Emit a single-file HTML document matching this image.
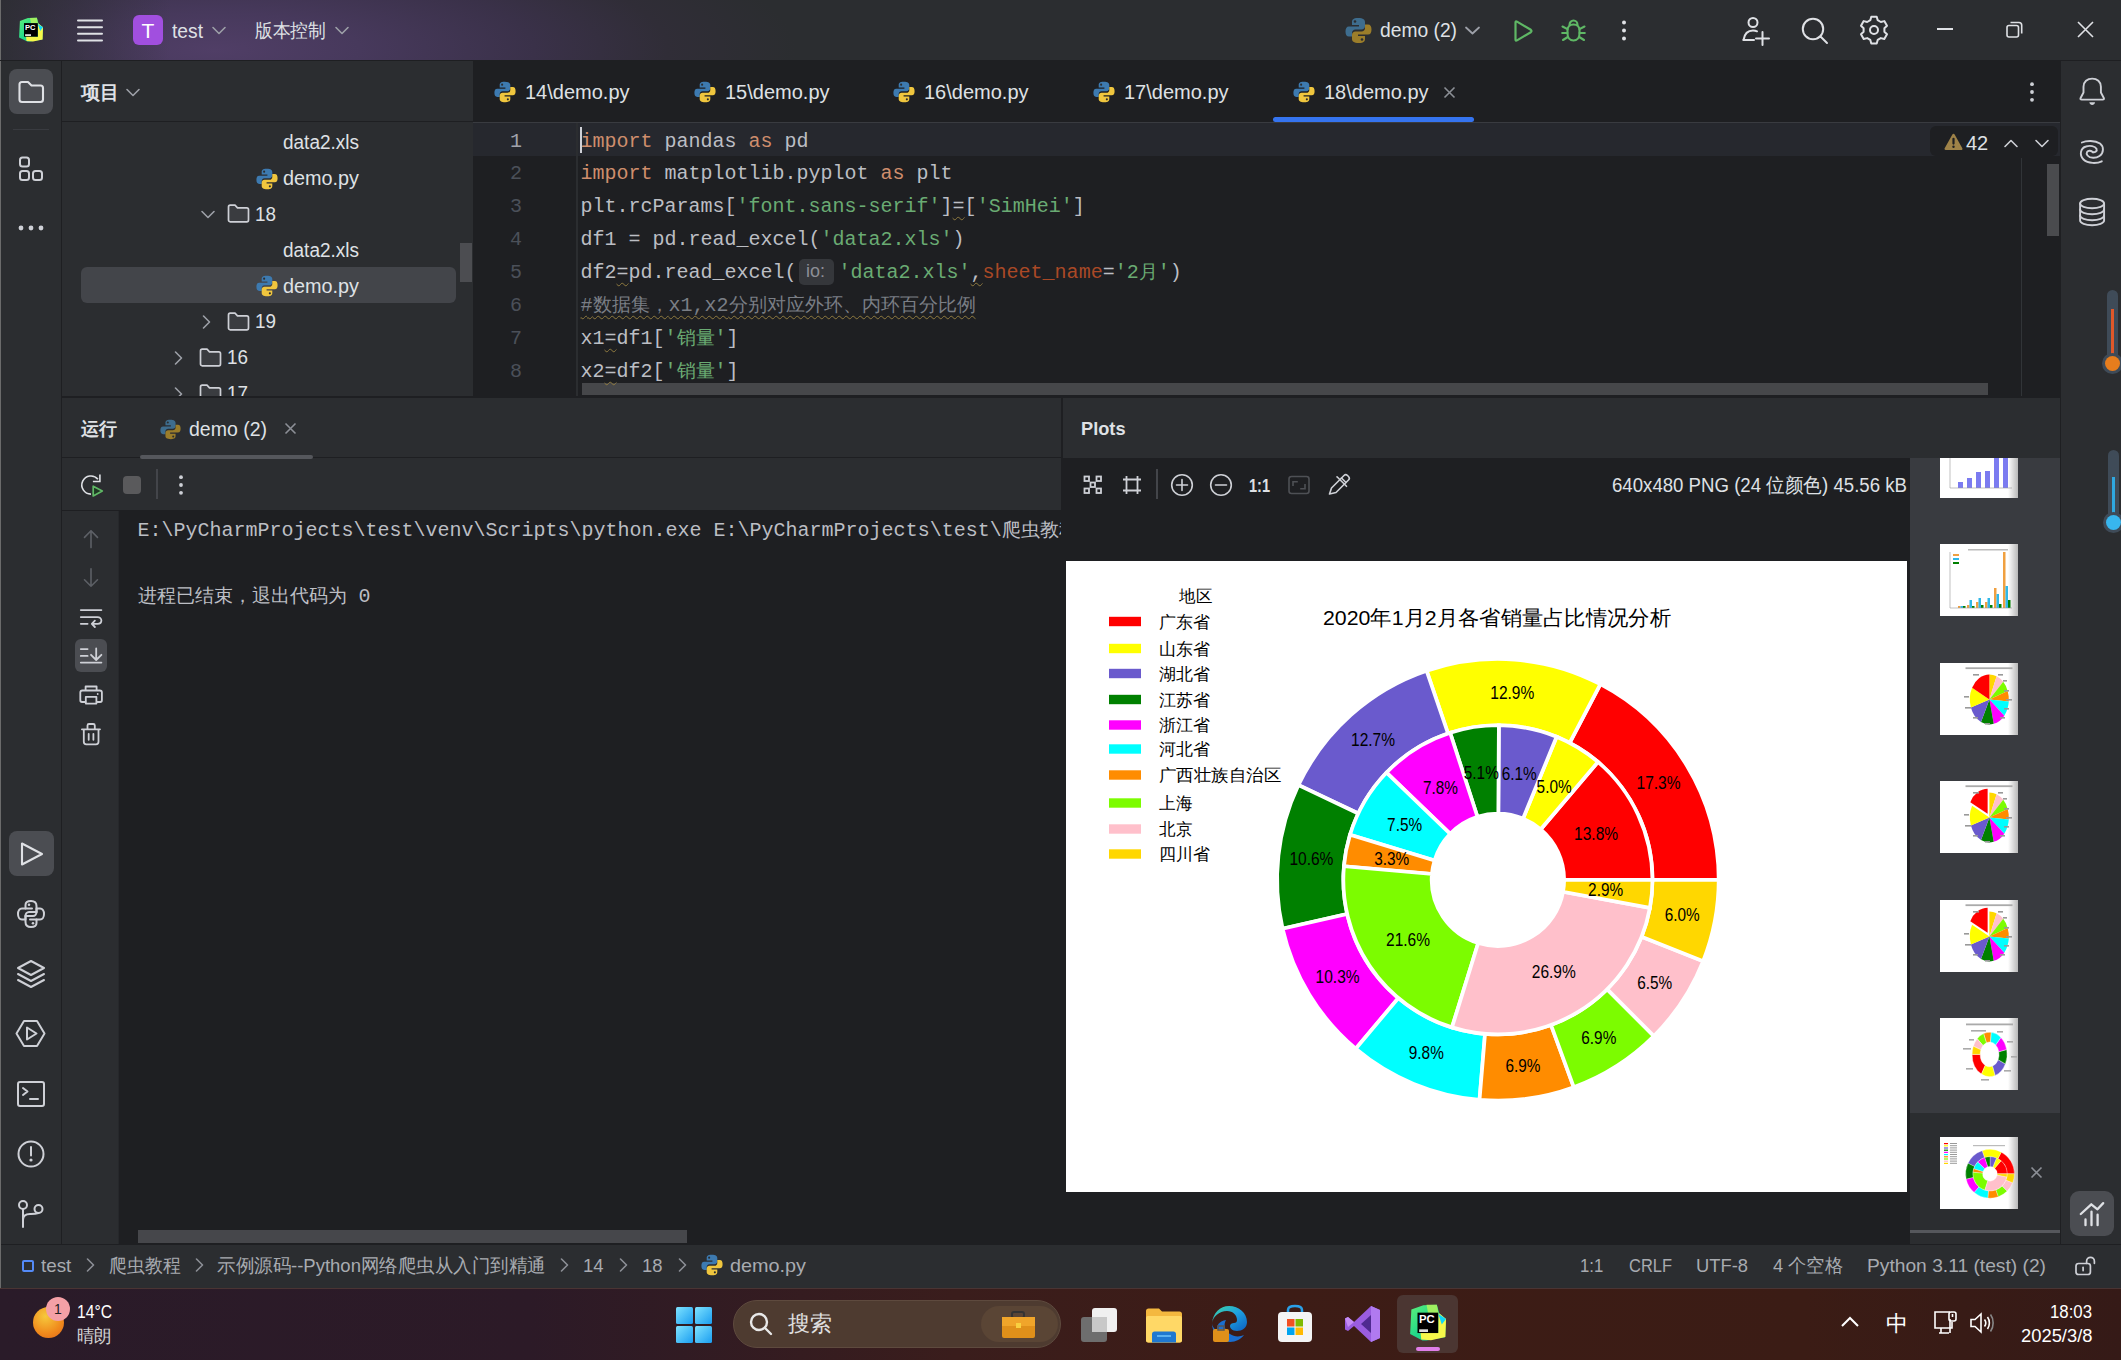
<!DOCTYPE html>
<html><head><meta charset="utf-8">
<style>
*{margin:0;padding:0;box-sizing:border-box}
html,body{width:2121px;height:1360px;overflow:hidden;background:#2b2d30;font-family:"Liberation Sans",sans-serif;color:#dfe1e5}
.a{position:absolute}
.t{position:absolute;white-space:nowrap;line-height:1}
.mono{font-family:"Liberation Mono",monospace}
.cj{font-family:"Liberation Serif",serif;font-size:18.9px}
svg{position:absolute;overflow:visible}
.ic{fill:none;stroke:#ced0d6;stroke-width:2;stroke-linecap:round;stroke-linejoin:round}
</style></head><body>
<div class="a" style="left:0;top:0;width:2121px;height:60px;background:#2b2d30"></div>
<div class="a" style="left:0;top:0;width:1000px;height:60px;background:linear-gradient(90deg,rgba(43,45,48,0.85) 0px,rgba(43,45,48,0) 170px),radial-gradient(ellipse 580px 150px at 215px 50px,#503e66 0%,#47395c 25%,#3a3149 55%,#302d37 78%,#2b2d30 100%)"></div>
<div class="a" style="left:0;top:0;width:1px;height:1290px;background:#6b6b6b"></div>
<div class="a" style="left:0;top:60px;width:2121px;height:1px;background:#1e1f22"></div>
<svg style="left:12px;top:12px" width="40" height="36" viewBox="12 12 40 36"><defs><linearGradient id="lg1" x1="0" y1="0" x2="1" y2="1"><stop offset="0" stop-color="#5ef07a"/><stop offset="0.5" stop-color="#21d789"/><stop offset="1" stop-color="#1fc98a"/></linearGradient></defs>
<path d="M19.9 21L27.9 18.1L36.9 17.8L38.5 23.5L43 27.3L42.4 39.5L30 41.6L27.3 41.6L19.1 37.4Z" fill="url(#lg1)"/>
<path d="M38 23.2L43 27.3L42.6 39.4L33 41.5L26.5 41L26 36L37.8 36.7Z" fill="#f6f84a"/>
<path d="M30 17.9L36.9 17.8L38 23.5L31 23.2Z" fill="#9ff060"/>
<path d="M37.8 23.9L43 27.3L40.2 31Z" fill="#0fd7f8"/>
<rect x="24" y="23.1" width="13.8" height="13.6" fill="#000"/>
<text x="25" y="30.2" font-size="7.6" font-weight="bold" fill="#fff" font-family="Liberation Sans" textLength="10.5" lengthAdjust="spacingAndGlyphs">PC</text>
<rect x="25.1" y="34.2" width="5.9" height="1.8" fill="#ddd"/></svg>
<svg style="left:77px;top:19px" width="26" height="23" viewBox="0 0 26 23"><g stroke="#dfe1e5" stroke-width="2" stroke-linecap="round"><path d="M1 1.5H25M1 8.2H25M1 14.8H25M1 21.5H25"/></g></svg>
<div class="a" style="left:133px;top:15px;width:30px;height:30px;border-radius:6px;background:#a14fdf"></div>
<div class="t" style="left:133px;top:20px;width:30px;text-align:center;font-size:21px;color:#fff">T</div>
<div class="t" style="left:172px;top:21px;font-size:20px;color:#dfe1e5;transform:scaleX(0.9612);transform-origin:0 0">test</div>
<svg style="left:212px;top:26px" width="14" height="9" viewBox="0 0 14 9"><path d="M1 1.5L7 7.5L13 1.5" class="ic" style="stroke:#9da0a8;stroke-width:1.6"/></svg>
<div class="t" style="left:255px;top:22px;font-size:18.5px;color:#dfe1e5;transform:scaleX(0.9342);transform-origin:0 0">版本控制</div>
<svg style="left:335px;top:26px" width="14" height="9" viewBox="0 0 14 9"><path d="M1 1.5L7 7.5L13 1.5" class="ic" style="stroke:#9da0a8;stroke-width:1.6"/></svg>
<svg style="left:1345px;top:17px" width="27" height="27" viewBox="0 0 27 27"><path d="M13 1C8 1 7 3 7 5V8H14V9.5H4C1.5 9.5 0.5 11.5 0.5 14.5C0.5 17.5 1.5 19.5 4 19.5H7V16C7 13.8 8.5 12.5 10.5 12.5H16.5C18.5 12.5 20 11 20 9V5C20 3 18.5 1 13 1Z" fill="#3e6d8e"/><path d="M14 26C19 26 20 24 20 22V19H13V17.5H23C25.5 17.5 26.5 15.5 26.5 12.5C26.5 9.5 25.5 7.5 23 7.5H20V11C20 13.2 18.5 14.5 16.5 14.5H10.5C8.5 14.5 7 16 7 18V22C7 24 8.5 26 14 26Z" fill="#9b7d2a"/><circle cx="10" cy="4.5" r="1.3" fill="#2b2d30"/><circle cx="17" cy="22.5" r="1.3" fill="#2b2d30"/></svg>
<div class="t" style="left:1380px;top:20px;font-size:20px;color:#dfe1e5;transform:scaleX(0.9621);transform-origin:0 0">demo (2)</div>
<svg style="left:1465px;top:26px" width="15" height="9" viewBox="0 0 15 9"><path d="M1 1.5L7.5 7.5L14 1.5" class="ic" style="stroke:#9da0a8;stroke-width:1.8"/></svg>
<svg style="left:1512px;top:19px" width="22" height="24" viewBox="0 0 22 24"><path d="M3.5 3.5Q3.5 1.8 5 2.6L18.8 10.8Q20.2 12 18.8 13.2L5 21.4Q3.5 22.2 3.5 20.5Z" fill="none" stroke="#5fb865" stroke-width="2.2" stroke-linejoin="round"/></svg>
<svg style="left:1561px;top:18px" width="25" height="25" viewBox="0 0 25 25"><g fill="none" stroke="#5fb865" stroke-width="2.1" stroke-linecap="round" stroke-linejoin="round"><path d="M8.5 7C8.5 4.5 10.3 2.5 12.5 2.5S16.5 4.5 16.5 7"/><path d="M12.5 6.5C8.5 6.5 6.5 9 6.5 12V15.5C6.5 19.5 9 22.5 12.5 22.5S18.5 19.5 18.5 15.5V12C18.5 9 16.5 6.5 12.5 6.5Z"/><path d="M1.5 8.5L6.5 11.2M23.5 8.5L18.5 11.2M1.2 15H6.5M23.8 15H18.5M2 22L6.8 19M23 22L18.2 19"/></g></svg>
<svg style="left:1620px;top:20px" width="8" height="22" viewBox="0 0 8 22"><g fill="#dfe1e5"><circle cx="4" cy="2.5" r="2"/><circle cx="4" cy="10.5" r="2"/><circle cx="4" cy="18.5" r="2"/></g></svg>
<svg style="left:1742px;top:16px" width="28" height="30" viewBox="0 0 28 30"><g class="ic" style="stroke:#dfe1e5"><circle cx="11" cy="6.5" r="4.5"/><path d="M1.5 24C2.5 17.5 6.5 14.5 11 14.5C12.8 14.5 14 14.8 15 15.3"/><path d="M1.5 24H12M20.5 16V29M14 22.5H27"/></g></svg>
<svg style="left:1801px;top:17px" width="28" height="28" viewBox="0 0 28 28"><g class="ic" style="stroke:#dfe1e5"><circle cx="12" cy="12" r="10.2"/><path d="M19.5 19.5L26 26"/></g></svg>
<svg style="left:1860px;top:16px" width="28" height="28" viewBox="0 0 28 28"><g class="ic" style="stroke:#dfe1e5"><path d="M11.3 2L16.7 2L17.7 5.5L20.8 7.3L24.3 6.4L27 11.1L24.4 13.6V17.1L27 19.6L24.3 24.3L20.8 23.4L17.7 25.2L16.7 28.7H11.3L10.3 25.2L7.2 23.4L3.7 24.3L1 19.6L3.6 17.1V13.6L1 11.1L3.7 6.4L7.2 7.3L10.3 5.5Z" transform="translate(0,-1.3)"/><circle cx="14" cy="14" r="4"/></g></svg>
<div class="a" style="left:1937px;top:28px;width:16px;height:2px;background:#dfe1e5"></div>
<svg style="left:2006px;top:21px" width="17" height="17" viewBox="0 0 17 17"><g fill="none" stroke="#dfe1e5" stroke-width="1.6"><rect x="1" y="4.5" width="11.5" height="11.5" rx="2"/><path d="M4.5 1.5H13C14.5 1.5 15.7 2.7 15.7 4.2V12.5"/></g></svg>
<svg style="left:2077px;top:21px" width="17" height="17" viewBox="0 0 17 17"><path d="M1 1L16 16M16 1L1 16" stroke="#dfe1e5" stroke-width="1.6"/></svg>
<!-- LEFT STRIP -->
<div class="a" style="left:1px;top:61px;width:60px;height:1183px;background:#2b2d30"></div>
<div class="a" style="left:61px;top:61px;width:1px;height:1183px;background:#1e1f22"></div>
<div class="a" style="left:9px;top:69px;width:44px;height:45px;border-radius:8px;background:#4b4d52"></div>
<svg style="left:17px;top:80px" width="28" height="24" viewBox="0 0 28 24"><path d="M2.5 4.5C2.5 2.8 3.5 2 5 2H11L14.5 5.5H23.5C25 5.5 26 6.5 26 8V19.5C26 21 25 22 23.5 22H5C3.5 22 2.5 21 2.5 19.5Z" class="ic" style="stroke:#dfe1e5;stroke-width:2.1"/></svg>
<div class="a" style="left:13px;top:129px;width:36px;height:1px;background:#393b40"></div>
<svg style="left:18px;top:156px" width="27" height="27" viewBox="0 0 27 27"><g class="ic" style="stroke:#ced0d6;stroke-width:2"><rect x="2" y="1.5" width="9" height="9" rx="2.5"/><rect x="2" y="15" width="9" height="9" rx="2.5"/><rect x="15" y="15" width="9" height="9" rx="2.5"/></g></svg>
<svg style="left:17px;top:224px" width="28" height="8" viewBox="0 0 28 8"><g fill="#ced0d6"><circle cx="4" cy="4" r="2.4"/><circle cx="14" cy="4" r="2.4"/><circle cx="24" cy="4" r="2.4"/></g></svg>
<!-- bottom left icons -->
<div class="a" style="left:9px;top:831px;width:45px;height:45px;border-radius:8px;background:#4b4d52"></div>
<svg style="left:19px;top:840px" width="26" height="28" viewBox="0 0 26 28"><path d="M3 3.5V24.5L23 14Z" class="ic" style="stroke:#dfe1e5;stroke-width:2.1"/></svg>
<svg style="left:16px;top:899px" width="30" height="30" viewBox="0 0 30 30"><g class="ic" style="stroke:#ced0d6;stroke-width:2"><path d="M15 2C10.5 2 9.5 4 9.5 6V9.5H16M20.5 13V7C20.5 4 18.5 2 15 2"/><path d="M9.5 9.5H6C3.5 9.5 2 12 2 15S3.5 20.5 6 20.5H9.5V17C9.5 15 11 13 13 13H20.5"/><path d="M15 28C19.5 28 20.5 26 20.5 24V20.5H14M9.5 17V23C9.5 26 11.5 28 15 28"/><path d="M20.5 20.5H24C26.5 20.5 28 18 28 15S26.5 9.5 24 9.5H20.5V13C20.5 15 19 17 17 17H9.5"/></g><circle cx="13" cy="5.8" r="1.3" fill="#ced0d6"/><circle cx="17" cy="24.2" r="1.3" fill="#ced0d6"/></svg>
<svg style="left:16px;top:959px" width="30" height="30" viewBox="0 0 30 30"><g class="ic" style="stroke:#ced0d6;stroke-width:2"><path d="M15 2L28 9L15 16L2 9Z"/><path d="M2 15L15 22L28 15"/><path d="M2 21L15 28L28 21"/></g></svg>
<svg style="left:15px;top:1019px" width="31" height="29" viewBox="0 0 31 29"><g class="ic" style="stroke:#ced0d6;stroke-width:2"><path d="M9 2H22L29.5 14.5L22 27H9L1.5 14.5Z"/><path d="M12 8.5V20.5L21.5 14.5Z"/></g></svg>
<svg style="left:16px;top:1080px" width="30" height="28" viewBox="0 0 30 28"><g class="ic" style="stroke:#ced0d6;stroke-width:2"><rect x="2" y="2" width="26" height="24" rx="2"/><path d="M7 8L11.5 11.5L7 15M14 19H22"/></g></svg>
<svg style="left:16px;top:1139px" width="30" height="30" viewBox="0 0 30 30"><g class="ic" style="stroke:#ced0d6;stroke-width:2"><circle cx="15" cy="15" r="12.5"/><path d="M15 8V16.5"/></g><circle cx="15" cy="21" r="1.6" fill="#ced0d6"/></svg>
<svg style="left:17px;top:1199px" width="28" height="30" viewBox="0 0 28 30"><g class="ic" style="stroke:#ced0d6;stroke-width:2"><circle cx="6" cy="6" r="4"/><circle cx="21.5" cy="10" r="4"/><path d="M6 10V28M6 21C6 17 9 15 13 15H14C17 15 20 14.5 21.5 14"/></g></svg>

<!-- PROJECT PANEL -->
<div class="a" style="left:62px;top:61px;width:411px;height:335px;background:#2b2d30"></div>
<div class="a" style="left:62px;top:121px;width:411px;height:1px;background:#1e1f22"></div>
<div class="t" style="left:81px;top:83px;font-size:19px;font-weight:bold;color:#dfe1e5">项目</div>
<svg style="left:126px;top:88px" width="14" height="9" viewBox="0 0 14 9"><path d="M1 1.5L7 7.5L13 1.5" class="ic" style="stroke:#9da0a8;stroke-width:1.6"/></svg>
<div class="a" style="left:81px;top:267px;width:375px;height:36px;border-radius:6px;background:#43454a"></div>
<div class="a" style="left:460px;top:243px;width:12px;height:39px;background:#4c4d51"></div>

<div class="a" style="left:62px;top:122px;width:410px;height:274px;overflow:hidden">
<div class="t" style="left:221px;top:10.0px;font-size:20px;color:#dfe1e5;transform:scaleX(0.9493);transform-origin:0 0">data2.xls</div>
<div class="t" style="left:221px;top:46.0px;font-size:20px;color:#dfe1e5;transform:scaleX(0.9906);transform-origin:0 0">demo.py</div>
<svg style="left:194px;top:45.5px" width="22" height="22" viewBox="0 0 27 27"><path d="M13 1C8 1 7 3 7 5V8H14V9.5H4C1.5 9.5 0.5 11.5 0.5 14.5C0.5 17.5 1.5 19.5 4 19.5H7V16C7 13.8 8.5 12.5 10.5 12.5H16.5C18.5 12.5 20 11 20 9V5C20 3 18.5 1 13 1Z" fill="#3d7ab0"/><path d="M14 26C19 26 20 24 20 22V19H13V17.5H23C25.5 17.5 26.5 15.5 26.5 12.5C26.5 9.5 25.5 7.5 23 7.5H20V11C20 13.2 18.5 14.5 16.5 14.5H10.5C8.5 14.5 7 16 7 18V22C7 24 8.5 26 14 26Z" fill="#f0c63e"/><circle cx="10" cy="4.5" r="1.3" fill="#2b2d30"/><circle cx="17" cy="22.5" r="1.3" fill="#2b2d30"/></svg>
<div class="t" style="left:193px;top:81.5px;font-size:20px;color:#dfe1e5;transform:scaleX(0.9438);transform-origin:0 0">18</div>
<svg style="left:165px;top:82px" width="23" height="19" viewBox="0 0 23 19"><path d="M1.5 3C1.5 2 2.2 1.2 3.2 1.2H8L10.5 3.8H19.8C20.8 3.8 21.5 4.5 21.5 5.5V16C21.5 17 20.8 17.8 19.8 17.8H3.2C2.2 17.8 1.5 17 1.5 16Z" fill="#3a3c40" stroke="#ced0d6" stroke-width="1.7" stroke-linejoin="round"/></svg>
<svg style="left:139px;top:88px" width="14" height="9" viewBox="0 0 14 9"><path d="M1 1.5L7 7.5L13 1.5" class="ic" style="stroke:#9da0a8;stroke-width:1.6"/></svg>
<div class="t" style="left:221px;top:118.0px;font-size:20px;color:#dfe1e5;transform:scaleX(0.9493);transform-origin:0 0">data2.xls</div>
<div class="t" style="left:221px;top:153.5px;font-size:20px;color:#dfe1e5;transform:scaleX(0.9906);transform-origin:0 0">demo.py</div>
<svg style="left:194px;top:153px" width="22" height="22" viewBox="0 0 27 27"><path d="M13 1C8 1 7 3 7 5V8H14V9.5H4C1.5 9.5 0.5 11.5 0.5 14.5C0.5 17.5 1.5 19.5 4 19.5H7V16C7 13.8 8.5 12.5 10.5 12.5H16.5C18.5 12.5 20 11 20 9V5C20 3 18.5 1 13 1Z" fill="#3d7ab0"/><path d="M14 26C19 26 20 24 20 22V19H13V17.5H23C25.5 17.5 26.5 15.5 26.5 12.5C26.5 9.5 25.5 7.5 23 7.5H20V11C20 13.2 18.5 14.5 16.5 14.5H10.5C8.5 14.5 7 16 7 18V22C7 24 8.5 26 14 26Z" fill="#f0c63e"/><circle cx="10" cy="4.5" r="1.3" fill="#2b2d30"/><circle cx="17" cy="22.5" r="1.3" fill="#2b2d30"/></svg>
<div class="t" style="left:193px;top:189.0px;font-size:20px;color:#dfe1e5;transform:scaleX(0.9438);transform-origin:0 0">19</div>
<svg style="left:165px;top:189.5px" width="23" height="19" viewBox="0 0 23 19"><path d="M1.5 3C1.5 2 2.2 1.2 3.2 1.2H8L10.5 3.8H19.8C20.8 3.8 21.5 4.5 21.5 5.5V16C21.5 17 20.8 17.8 19.8 17.8H3.2C2.2 17.8 1.5 17 1.5 16Z" fill="#3a3c40" stroke="#ced0d6" stroke-width="1.7" stroke-linejoin="round"/></svg>
<svg style="left:140px;top:192.5px" width="9" height="14" viewBox="0 0 9 14"><path d="M1.5 1L7.5 7L1.5 13" class="ic" style="stroke:#9da0a8;stroke-width:1.6"/></svg>
<div class="t" style="left:165px;top:225.0px;font-size:20px;color:#dfe1e5;transform:scaleX(0.9438);transform-origin:0 0">16</div>
<svg style="left:137px;top:225.5px" width="23" height="19" viewBox="0 0 23 19"><path d="M1.5 3C1.5 2 2.2 1.2 3.2 1.2H8L10.5 3.8H19.8C20.8 3.8 21.5 4.5 21.5 5.5V16C21.5 17 20.8 17.8 19.8 17.8H3.2C2.2 17.8 1.5 17 1.5 16Z" fill="#3a3c40" stroke="#ced0d6" stroke-width="1.7" stroke-linejoin="round"/></svg>
<svg style="left:112px;top:228.5px" width="9" height="14" viewBox="0 0 9 14"><path d="M1.5 1L7.5 7L1.5 13" class="ic" style="stroke:#9da0a8;stroke-width:1.6"/></svg>
<div class="t" style="left:165px;top:261.0px;font-size:20px;color:#dfe1e5;transform:scaleX(0.9438);transform-origin:0 0">17</div>
<svg style="left:137px;top:261.5px" width="23" height="19" viewBox="0 0 23 19"><path d="M1.5 3C1.5 2 2.2 1.2 3.2 1.2H8L10.5 3.8H19.8C20.8 3.8 21.5 4.5 21.5 5.5V16C21.5 17 20.8 17.8 19.8 17.8H3.2C2.2 17.8 1.5 17 1.5 16Z" fill="#3a3c40" stroke="#ced0d6" stroke-width="1.7" stroke-linejoin="round"/></svg>
<svg style="left:112px;top:264.5px" width="9" height="14" viewBox="0 0 9 14"><path d="M1.5 1L7.5 7L1.5 13" class="ic" style="stroke:#9da0a8;stroke-width:1.6"/></svg>
</div>
<div class="a" style="left:473px;top:61px;width:1588px;height:335px;background:#1e1f22"></div>
<div class="a" style="left:473px;top:122px;width:1588px;height:1px;background:#393b40"></div>
<svg style="left:494px;top:81px" width="22" height="22" viewBox="0 0 27 27"><path d="M13 1C8 1 7 3 7 5V8H14V9.5H4C1.5 9.5 0.5 11.5 0.5 14.5C0.5 17.5 1.5 19.5 4 19.5H7V16C7 13.8 8.5 12.5 10.5 12.5H16.5C18.5 12.5 20 11 20 9V5C20 3 18.5 1 13 1Z" fill="#3d7ab0"/><path d="M14 26C19 26 20 24 20 22V19H13V17.5H23C25.5 17.5 26.5 15.5 26.5 12.5C26.5 9.5 25.5 7.5 23 7.5H20V11C20 13.2 18.5 14.5 16.5 14.5H10.5C8.5 14.5 7 16 7 18V22C7 24 8.5 26 14 26Z" fill="#f0c63e"/><circle cx="10" cy="4.5" r="1.3" fill="#2b2d30"/><circle cx="17" cy="22.5" r="1.3" fill="#2b2d30"/></svg>
<div class="t" style="left:525px;top:82px;font-size:20px;color:#dfe1e5">14\demo.py</div>
<svg style="left:694px;top:81px" width="22" height="22" viewBox="0 0 27 27"><path d="M13 1C8 1 7 3 7 5V8H14V9.5H4C1.5 9.5 0.5 11.5 0.5 14.5C0.5 17.5 1.5 19.5 4 19.5H7V16C7 13.8 8.5 12.5 10.5 12.5H16.5C18.5 12.5 20 11 20 9V5C20 3 18.5 1 13 1Z" fill="#3d7ab0"/><path d="M14 26C19 26 20 24 20 22V19H13V17.5H23C25.5 17.5 26.5 15.5 26.5 12.5C26.5 9.5 25.5 7.5 23 7.5H20V11C20 13.2 18.5 14.5 16.5 14.5H10.5C8.5 14.5 7 16 7 18V22C7 24 8.5 26 14 26Z" fill="#f0c63e"/><circle cx="10" cy="4.5" r="1.3" fill="#2b2d30"/><circle cx="17" cy="22.5" r="1.3" fill="#2b2d30"/></svg>
<div class="t" style="left:725px;top:82px;font-size:20px;color:#dfe1e5">15\demo.py</div>
<svg style="left:893px;top:81px" width="22" height="22" viewBox="0 0 27 27"><path d="M13 1C8 1 7 3 7 5V8H14V9.5H4C1.5 9.5 0.5 11.5 0.5 14.5C0.5 17.5 1.5 19.5 4 19.5H7V16C7 13.8 8.5 12.5 10.5 12.5H16.5C18.5 12.5 20 11 20 9V5C20 3 18.5 1 13 1Z" fill="#3d7ab0"/><path d="M14 26C19 26 20 24 20 22V19H13V17.5H23C25.5 17.5 26.5 15.5 26.5 12.5C26.5 9.5 25.5 7.5 23 7.5H20V11C20 13.2 18.5 14.5 16.5 14.5H10.5C8.5 14.5 7 16 7 18V22C7 24 8.5 26 14 26Z" fill="#f0c63e"/><circle cx="10" cy="4.5" r="1.3" fill="#2b2d30"/><circle cx="17" cy="22.5" r="1.3" fill="#2b2d30"/></svg>
<div class="t" style="left:924px;top:82px;font-size:20px;color:#dfe1e5">16\demo.py</div>
<svg style="left:1093px;top:81px" width="22" height="22" viewBox="0 0 27 27"><path d="M13 1C8 1 7 3 7 5V8H14V9.5H4C1.5 9.5 0.5 11.5 0.5 14.5C0.5 17.5 1.5 19.5 4 19.5H7V16C7 13.8 8.5 12.5 10.5 12.5H16.5C18.5 12.5 20 11 20 9V5C20 3 18.5 1 13 1Z" fill="#3d7ab0"/><path d="M14 26C19 26 20 24 20 22V19H13V17.5H23C25.5 17.5 26.5 15.5 26.5 12.5C26.5 9.5 25.5 7.5 23 7.5H20V11C20 13.2 18.5 14.5 16.5 14.5H10.5C8.5 14.5 7 16 7 18V22C7 24 8.5 26 14 26Z" fill="#f0c63e"/><circle cx="10" cy="4.5" r="1.3" fill="#2b2d30"/><circle cx="17" cy="22.5" r="1.3" fill="#2b2d30"/></svg>
<div class="t" style="left:1124px;top:82px;font-size:20px;color:#dfe1e5">17\demo.py</div>
<svg style="left:1293px;top:81px" width="22" height="22" viewBox="0 0 27 27"><path d="M13 1C8 1 7 3 7 5V8H14V9.5H4C1.5 9.5 0.5 11.5 0.5 14.5C0.5 17.5 1.5 19.5 4 19.5H7V16C7 13.8 8.5 12.5 10.5 12.5H16.5C18.5 12.5 20 11 20 9V5C20 3 18.5 1 13 1Z" fill="#3d7ab0"/><path d="M14 26C19 26 20 24 20 22V19H13V17.5H23C25.5 17.5 26.5 15.5 26.5 12.5C26.5 9.5 25.5 7.5 23 7.5H20V11C20 13.2 18.5 14.5 16.5 14.5H10.5C8.5 14.5 7 16 7 18V22C7 24 8.5 26 14 26Z" fill="#f0c63e"/><circle cx="10" cy="4.5" r="1.3" fill="#2b2d30"/><circle cx="17" cy="22.5" r="1.3" fill="#2b2d30"/></svg>
<div class="t" style="left:1324px;top:82px;font-size:20px;color:#dfe1e5">18\demo.py</div>
<svg style="left:1443px;top:86px" width="13" height="13" viewBox="0 0 13 13"><path d="M1.5 1.5L11.5 11.5M11.5 1.5L1.5 11.5" stroke="#8c8f96" stroke-width="1.6"/></svg>
<div class="a" style="left:1273px;top:117px;width:201px;height:5px;border-radius:3px;background:#3574f0"></div>
<svg style="left:2028px;top:82px" width="8" height="20" viewBox="0 0 8 20"><g fill="#ced0d6"><circle cx="4" cy="2.2" r="1.9"/><circle cx="4" cy="10" r="1.9"/><circle cx="4" cy="17.8" r="1.9"/></g></svg>
<div class="a" style="left:473px;top:123px;width:1588px;height:33px;background:#26282e"></div>
<div class="a" style="left:576px;top:123px;width:2px;height:273px;background:#2b2d30"></div>
<div class="a" style="left:2021px;top:158px;width:1px;height:238px;background:#313438"></div>
<div class="a" style="left:1930px;top:126px;width:128px;height:30px;border-radius:6px;background:#1e1f22"></div>
<svg style="left:1944px;top:133px" width="19" height="18" viewBox="0 0 19 18"><path d="M9.5 2.2L17.2 15.8H1.8Z" fill="#9e8248" stroke="#9e8248" stroke-width="2.6" stroke-linejoin="round"/><path d="M9.5 5.8V10.6" stroke="#1e1f22" stroke-width="2.2" stroke-linecap="round"/><circle cx="9.5" cy="13.8" r="1.2" fill="#1e1f22"/></svg>
<div class="t" style="left:1966px;top:133px;font-size:20px;color:#dfe1e5">42</div>
<svg style="left:2004px;top:139px" width="14" height="9" viewBox="0 0 14 9"><path d="M1 7.5L7 1.5L13 7.5" class="ic" style="stroke:#ced0d6;stroke-width:1.6"/></svg>
<svg style="left:2035px;top:139px" width="14" height="9" viewBox="0 0 14 9"><path d="M1 1.5L7 7.5L13 1.5" class="ic" style="stroke:#ced0d6;stroke-width:1.6"/></svg>
<div class="a" style="left:2047px;top:164px;width:12px;height:72px;background:#4a4b4e"></div>
<div class="a" style="left:582px;top:383px;width:1406px;height:12px;background:#46474a"></div>
<div class="t mono" style="left:498px;top:131.5px;width:24px;text-align:right;font-size:20px;color:#a1a3ab">1</div>
<div class="t mono" style="left:498px;top:164.4px;width:24px;text-align:right;font-size:20px;color:#4b5059">2</div>
<div class="t mono" style="left:498px;top:197.4px;width:24px;text-align:right;font-size:20px;color:#4b5059">3</div>
<div class="t mono" style="left:498px;top:230.3px;width:24px;text-align:right;font-size:20px;color:#4b5059">4</div>
<div class="t mono" style="left:498px;top:263.2px;width:24px;text-align:right;font-size:20px;color:#4b5059">5</div>
<div class="t mono" style="left:498px;top:296.1px;width:24px;text-align:right;font-size:20px;color:#4b5059">6</div>
<div class="t mono" style="left:498px;top:329.1px;width:24px;text-align:right;font-size:20px;color:#4b5059">7</div>
<div class="t mono" style="left:498px;top:362.0px;width:24px;text-align:right;font-size:20px;color:#4b5059">8</div>
<div class="t mono" style="left:580.5px;top:131.5px;font-size:20px;color:#bcbec4"><span style="color:#cf8e6d">import</span><span style="color:#bcbec4"> pandas </span><span style="color:#cf8e6d">as</span><span style="color:#bcbec4"> pd</span></div>
<div class="t mono" style="left:580.5px;top:164.4px;font-size:20px;color:#bcbec4"><span style="color:#cf8e6d">import</span><span style="color:#bcbec4"> matplotlib.pyplot </span><span style="color:#cf8e6d">as</span><span style="color:#bcbec4"> plt</span></div>
<div class="t mono" style="left:580.5px;top:197.4px;font-size:20px;color:#bcbec4"><span style="color:#bcbec4">plt.rcParams[</span><span style="color:#6aab73">'font.sans-serif'</span><span style="color:#bcbec4">]</span><span style="color:#bcbec4;text-decoration:underline wavy #8f7a3f;text-decoration-thickness:1px;text-underline-offset:4px">=</span><span style="color:#bcbec4">[</span><span style="color:#6aab73">'SimHei'</span><span style="color:#bcbec4">]</span></div>
<div class="t mono" style="left:580.5px;top:230.3px;font-size:20px;color:#bcbec4"><span style="color:#bcbec4">df1 = pd.read_excel(</span><span style="color:#6aab73">'data2.xls'</span><span style="color:#bcbec4">)</span></div>
<div class="t mono" style="left:580.5px;top:263.2px;font-size:20px;color:#bcbec4"><span style="color:#bcbec4">df2</span><span style="color:#bcbec4;text-decoration:underline wavy #8f7a3f;text-decoration-thickness:1px;text-underline-offset:4px">=</span><span style="color:#bcbec4">pd.read_excel(</span><span style="display:inline-block;width:42px"></span><span style="color:#6aab73">'data2.xls'</span><span style="color:#bcbec4;text-decoration:underline wavy #8f7a3f;text-decoration-thickness:1px;text-underline-offset:4px">,</span><span style="color:#aa4926">sheet_name</span><span style="color:#bcbec4">=</span><span style="color:#6aab73">'2<span class="cj">月</span>'</span><span style="color:#bcbec4">)</span></div>
<div class="t mono" style="left:580.5px;top:296.1px;font-size:20px;color:#bcbec4"><span style="color:#7a7e85;text-decoration:underline wavy #8f7a3f;text-decoration-thickness:1px;text-underline-offset:4px">#<span class="cj">数据集，</span>x1,x2<span class="cj">分别对应外环、内环百分比例</span></span></div>
<div class="t mono" style="left:580.5px;top:329.1px;font-size:20px;color:#bcbec4"><span style="color:#bcbec4">x1</span><span style="color:#bcbec4;text-decoration:underline wavy #8f7a3f;text-decoration-thickness:1px;text-underline-offset:4px">=</span><span style="color:#bcbec4">df1[</span><span style="color:#6aab73">'<span class="cj">销量</span>'</span><span style="color:#bcbec4">]</span></div>
<div class="t mono" style="left:580.5px;top:362.0px;font-size:20px;color:#bcbec4"><span style="color:#bcbec4">x2</span><span style="color:#bcbec4;text-decoration:underline wavy #8f7a3f;text-decoration-thickness:1px;text-underline-offset:4px">=</span><span style="color:#bcbec4">df2[</span><span style="color:#6aab73">'<span class="cj">销量</span>'</span><span style="color:#bcbec4">]</span></div>
<div class="a" style="left:799px;top:259px;width:35px;height:26px;border-radius:5px;background:#35373b"></div>
<div class="t" style="left:806px;top:262px;font-size:18px;color:#8c8f96">io:</div>
<div class="a" style="left:580px;top:127px;width:2px;height:26px;background:#ced0d6"></div>
<div class="a" style="left:473px;top:396px;width:1588px;height:2px;background:#1e1f22"></div>
<!-- RIGHT STRIP -->
<div class="a" style="left:2061px;top:61px;width:60px;height:1183px;background:#2b2d30"></div>
<div class="a" style="left:2060px;top:61px;width:1px;height:1183px;background:#1e1f22"></div>
<svg style="left:2061px;top:61px" width="60" height="180" viewBox="2061 61 60 180"><g fill="none" stroke="#ced0d6" stroke-width="1.9" stroke-linecap="round" stroke-linejoin="round">
<path d="M2083.5 92.5V86.8C2083.5 81.8 2087.3 78.6 2092.2 78.6C2097.1 78.6 2100.9 81.8 2100.9 86.8V92.5L2103.8 98Q2104.5 99.6 2102.7 99.6H2081.7Q2079.9 99.6 2080.6 98Z"/>
<path d="M2081.9 142.5C2086 140.5 2095 140 2100 143.5C2104 146.5 2104 153 2099.5 156C2096 158.5 2090 158.5 2087.5 155.5C2085.5 153 2087.5 150.5 2090 150.8C2091.5 151 2092.5 151.8 2093 152.3"/>
<path d="M2101.8 161.3C2097.5 163.5 2088 164 2083.5 159.5C2079 155 2080.5 148 2086 146.5C2090 145.3 2095 146 2096.5 148.8C2097.5 151 2095 152.5 2093 152.3"/>
<ellipse cx="2092.1" cy="203.5" rx="12" ry="4.7"/><path d="M2080.1 203.5V220.6C2080.1 223.2 2085.5 225.3 2092.1 225.3C2098.7 225.3 2104.1 223.2 2104.1 220.6V203.5"/><path d="M2080.1 209.5C2080.1 212.1 2085.5 214.2 2092.1 214.2C2098.7 214.2 2104.1 212.1 2104.1 209.5M2080.1 215.5C2080.1 218.1 2085.5 220.2 2092.1 220.2C2098.7 220.2 2104.1 218.1 2104.1 215.5"/>
</g><path d="M2089.3 102.3H2095.1C2094.7 104 2093.6 105 2092.2 105C2090.8 105 2089.7 104 2089.3 102.3Z" fill="#ced0d6"/></svg>
<!-- thermometers -->
<div class="a" style="left:2106.5px;top:290px;width:11px;height:78px;border-radius:6px;background:#3f4b58"></div>
<div class="a" style="left:2110.5px;top:309px;width:3.5px;height:50px;background:#e0582a"></div>
<div class="a" style="left:2101.5px;top:352.5px;width:21px;height:21px;border-radius:11px;background:#3f4b58"></div>
<div class="a" style="left:2104.5px;top:355.5px;width:15px;height:15px;border-radius:8px;background:#e77d1d"></div>
<div class="a" style="left:2107.5px;top:450px;width:11px;height:78px;border-radius:6px;background:#3f4b58"></div>
<div class="a" style="left:2111.5px;top:477px;width:3.5px;height:40px;background:#2fa8e0"></div>
<div class="a" style="left:2102.5px;top:512px;width:21px;height:21px;border-radius:11px;background:#3f4b58"></div>
<div class="a" style="left:2105.5px;top:515px;width:15px;height:15px;border-radius:8px;background:#38b6ee"></div>
<!-- bottom right plot button -->
<div class="a" style="left:2070px;top:1191px;width:44px;height:45px;border-radius:9px;background:#4b4d52"></div>
<svg style="left:2060px;top:1185px" width="61" height="60" viewBox="2060 1185 61 60"><g fill="none" stroke="#dfe1e5" stroke-width="2.3" stroke-linecap="round" stroke-linejoin="round"><path d="M2080.8 1214L2091.3 1204.3L2097.5 1209.3L2103.2 1203.1"/><path d="M2085.5 1219.4V1225.2M2091.5 1211.6V1225.2M2097.6 1214.7V1225.2"/></g></svg>
<div class="a" style="left:62px;top:396px;width:1999px;height:2px;background:#1e1f22"></div>
<div class="a" style="left:62px;top:398px;width:999px;height:846px;background:#2b2d30"></div>
<div class="a" style="left:62px;top:457px;width:999px;height:1px;background:#1e1f22"></div>
<div class="t" style="left:81px;top:420px;font-size:18px;color:#dfe1e5;font-weight:bold;transform:scaleX(1.0000);transform-origin:0 0">运行</div>
<svg style="left:160px;top:419px" width="21" height="21" viewBox="0 0 27 27"><path d="M13 1C8 1 7 3 7 5V8H14V9.5H4C1.5 9.5 0.5 11.5 0.5 14.5C0.5 17.5 1.5 19.5 4 19.5H7V16C7 13.8 8.5 12.5 10.5 12.5H16.5C18.5 12.5 20 11 20 9V5C20 3 18.5 1 13 1Z" fill="#3e6d8e"/><path d="M14 26C19 26 20 24 20 22V19H13V17.5H23C25.5 17.5 26.5 15.5 26.5 12.5C26.5 9.5 25.5 7.5 23 7.5H20V11C20 13.2 18.5 14.5 16.5 14.5H10.5C8.5 14.5 7 16 7 18V22C7 24 8.5 26 14 26Z" fill="#9b7d2a"/><circle cx="10" cy="4.5" r="1.3" fill="#2b2d30"/><circle cx="17" cy="22.5" r="1.3" fill="#2b2d30"/></svg>
<div class="t" style="left:189px;top:418.5px;font-size:20px;color:#dfe1e5;transform:scaleX(0.9746);transform-origin:0 0">demo (2)</div>
<svg style="left:284px;top:422px" width="13" height="13" viewBox="0 0 13 13"><path d="M1.5 1.5L11.5 11.5M11.5 1.5L1.5 11.5" stroke="#8c8f96" stroke-width="1.6"/></svg>
<div class="a" style="left:140px;top:455px;width:173px;height:4px;border-radius:2px;background:#55575c"></div>
<svg style="left:62px;top:460px" width="138" height="50" viewBox="0 0 138 50"><path d="M28.95 34.15A9.1 9.1 0 1 1 35.92 19.2" fill="none" stroke="#dfe1e5" stroke-width="1.6"/><path d="M30.9 21.5H37.9V14.6" fill="none" stroke="#dfe1e5" stroke-width="1.6"/><path d="M31.2 26.2V35.9L40.3 30.9Z" fill="#1f3823" stroke="#5fb865" stroke-width="1.7" stroke-linejoin="round"/></svg>
<div class="a" style="left:123px;top:476px;width:18px;height:18px;border-radius:4px;background:#5a5a5c"></div>
<div class="a" style="left:156px;top:469px;width:2px;height:30px;background:#43454a"></div>
<svg style="left:177px;top:475px" width="8" height="20" viewBox="0 0 8 20"><g fill="#ced0d6"><circle cx="4" cy="2.2" r="1.9"/><circle cx="4" cy="10" r="1.9"/><circle cx="4" cy="17.8" r="1.9"/></g></svg>
<div class="a" style="left:62px;top:510px;width:999px;height:1px;background:#1e1f22"></div>
<div class="a" style="left:119px;top:511px;width:942px;height:733px;background:#1e1f22"></div>
<div class="a" style="left:62px;top:511px;width:57px;height:733px;background:#2b2d30"></div>
<div class="a" style="left:118px;top:511px;width:1px;height:733px;background:#26282b"></div>
<div class="a" style="left:75px;top:639px;width:32px;height:33px;border-radius:6px;background:#4b4d52"></div>
<svg style="left:62px;top:511px" width="56" height="250" viewBox="62 511 56 250"><g fill="none" stroke-linecap="round" stroke-linejoin="round">
<g stroke="#5d6066" stroke-width="1.6"><path d="M91 547.6V530.8M84.5 537.4L91 530.8L97.5 537.4"/><path d="M91 568.8V586.2M84.5 579.8L91 586.2L97.5 579.8"/></g>
<g stroke="#ced0d6" stroke-width="1.8">
<path d="M80.8 610.1H101.4"/><path d="M80.8 617.1H97.5C99.8 617.1 101.4 618.7 101.4 620.5C101.4 622.3 99.8 623.8 97.5 623.8H91.8M94.9 620.6L91.8 623.8L94.9 627"/><path d="M80.8 623.8H87.6"/>
<path d="M80.8 649.1H87.6M80.8 655.9H87.6M80.8 662.6H101.4M96.2 648.5V659.8M91 654.8L96.2 660L101.4 654.8"/>
<path d="M85.6 690V686.5H96.6V690"/><path d="M85.4 702H82C81 702 80.3 701.3 80.3 700.3V692.5C80.3 691.3 81.2 690.5 82.4 690.5H99.8C101 690.5 101.9 691.3 101.9 692.5V700.3C101.9 701.3 101.2 702 100.2 702H96.8"/><path d="M85.8 696.8H96.4V703.6H85.8Z"/>
<path d="M81.9 729.3H100M87.5 729V725.5C87.5 724.6 88.1 724 89 724H93.2C94.1 724 94.8 724.6 94.8 725.5V729M83.8 729.5V741.8C83.8 743.3 84.8 744.3 86.3 744.3H96C97.5 744.3 98.5 743.3 98.5 741.8V729.5M88.7 733.8V739.8M93.4 733.8V739.8"/>
</g></g><circle cx="97.7" cy="694" r="0.9" fill="#ced0d6"/></svg>
<div class="t mono" style="left:137.5px;top:520.5px;font-size:20px;color:#bcbec4">E:\PyCharmProjects\test\venv\Scripts\python.exe E:\PyCharmProjects\test\<span class="cj">爬虫教程</span>\示例源码</div>
<div class="t mono" style="left:137.5px;top:586.5px;font-size:20px;color:#bcbec4"><span class="cj">进程已结束，退出代码为</span> 0</div>
<div class="a" style="left:138px;top:1230px;width:549px;height:13px;background:#46474b"></div>
<div class="a" style="left:1061px;top:398px;width:2px;height:846px;background:#1e1f22"></div>
<div class="a" style="left:1063px;top:398px;width:997px;height:60px;background:#2b2d30"></div>
<div class="a" style="left:1063px;top:458px;width:997px;height:786px;background:#1e1f22"></div>
<div class="t" style="left:1081px;top:419px;font-size:19px;color:#dfe1e5;font-weight:bold;transform:scaleX(0.9580);transform-origin:0 0">Plots</div>
<svg style="left:1083px;top:475px" width="21" height="21" viewBox="0 0 21 21"><g fill="none" stroke="#ced0d6" stroke-width="1.8"><rect x="1.5" y="1.5" width="4.5" height="4.5"/><rect x="13.5" y="1.5" width="4.5" height="4.5"/><rect x="7.5" y="7.5" width="4.5" height="4.5"/><rect x="1.5" y="13.5" width="4.5" height="4.5"/><rect x="13.5" y="13.5" width="4.5" height="4.5"/></g></svg>
<svg style="left:1122px;top:475px" width="20" height="20" viewBox="0 0 20 20"><path d="M4.5 1V19M15.5 1V19M1 4.5H19M1 15.5H19" stroke="#ced0d6" stroke-width="1.8" fill="none"/></svg>
<div class="a" style="left:1156px;top:469px;width:1.5px;height:30px;background:#43454a"></div>
<svg style="left:1170px;top:473px" width="24" height="24" viewBox="0 0 24 24"><g class="ic" style="stroke:#ced0d6;stroke-width:1.6"><circle cx="12" cy="12" r="10.3"/><path d="M6.5 12H17.5M12 6.5V17.5"/></g></svg>
<svg style="left:1209px;top:473px" width="24" height="24" viewBox="0 0 24 24"><g class="ic" style="stroke:#ced0d6;stroke-width:1.6"><circle cx="12" cy="12" r="10.3"/><path d="M6.5 12H17.5"/></g></svg>
<div class="t" style="left:1249px;top:476px;font-size:19px;color:#dfe1e5;font-weight:bold;transform:scaleX(0.7645);transform-origin:0 0">1:1</div>
<svg style="left:1070px;top:462px" width="290" height="46" viewBox="1070 462 290 46"><rect x="1289" y="476.5" width="20" height="17" rx="2.5" fill="none" stroke="#4e5055" stroke-width="1.6"/><path d="M1293 486V481.8H1297.8M1305 483.9V488.7H1300.2" fill="none" stroke="#4e5055" stroke-width="1.6"/></svg>
<svg style="left:1070px;top:462px" width="290" height="46" viewBox="1070 462 290 46"><g fill="none" stroke="#ced0d6" stroke-width="1.6" stroke-linejoin="round" stroke-linecap="round"><path d="M1329.5 494L1331.5 488L1341.5 478L1346 482.5L1336 492.5Z"/><path d="M1337 476.8L1346.5 486.3"/><path d="M1341.5 478L1344 475.5C1345 474.5 1346.5 474.5 1347.5 475.5L1348.5 476.5C1349.5 477.5 1349.5 479 1348.5 480L1346 482.5"/></g></svg>
<div class="t" style="left:1612px;top:475px;font-size:20px;color:#dfe1e5;transform:scaleX(0.9311);transform-origin:0 0">640x480 PNG (24 位颜色) 45.56 kB</div>
<div class="a" style="left:1910px;top:458px;width:150px;height:786px;background:#393b40"></div>
<div class="a" style="left:1910px;top:1113px;width:150px;height:116px;background:#2b2d30"></div>
<div class="a" style="left:1910px;top:1229px;width:150px;height:15px;background:#2b2d30"></div>
<div class="a" style="left:1910px;top:1230px;width:150px;height:3px;background:#55575c"></div>
<svg style="left:2030px;top:1166px" width="13" height="13" viewBox="0 0 13 13"><path d="M1.5 1.5L11.5 11.5M11.5 1.5L1.5 11.5" stroke="#8c8f96" stroke-width="1.6"/></svg>
<svg style="left:1066px;top:561px" width="841" height="631" viewBox="0 0 841 631">
<rect width="841" height="631" fill="#fff"/>
<path d="M652.70,318.80 A220.80,220.80 0 0 0 534.39,123.23 L503.64,181.90 A154.56,154.56 0 0 1 586.46,318.80 Z" fill="#ff0000" stroke="#fff" stroke-width="3.7" stroke-linejoin="miter"/>
<path d="M534.39,123.23 A220.80,220.80 0 0 0 360.64,109.82 L382.02,172.51 A154.56,154.56 0 0 1 503.64,181.90 Z" fill="#ffff00" stroke="#fff" stroke-width="3.7" stroke-linejoin="miter"/>
<path d="M360.64,109.82 A220.80,220.80 0 0 0 232.45,224.07 L292.29,252.49 A154.56,154.56 0 0 1 382.02,172.51 Z" fill="#6a5acd" stroke="#fff" stroke-width="3.7" stroke-linejoin="miter"/>
<path d="M232.45,224.07 A220.80,220.80 0 0 0 216.58,367.69 L281.18,353.02 A154.56,154.56 0 0 1 292.29,252.49 Z" fill="#008000" stroke="#fff" stroke-width="3.7" stroke-linejoin="miter"/>
<path d="M216.58,367.69 A220.80,220.80 0 0 0 289.71,487.72 L332.36,437.04 A154.56,154.56 0 0 1 281.18,353.02 Z" fill="#ff00ff" stroke="#fff" stroke-width="3.7" stroke-linejoin="miter"/>
<path d="M289.71,487.72 A220.80,220.80 0 0 0 413.52,538.83 L419.03,472.82 A154.56,154.56 0 0 1 332.36,437.04 Z" fill="#00ffff" stroke="#fff" stroke-width="3.7" stroke-linejoin="miter"/>
<path d="M413.52,538.83 A220.80,220.80 0 0 0 507.74,526.17 L484.99,463.96 A154.56,154.56 0 0 1 419.03,472.82 Z" fill="#ff8c00" stroke="#fff" stroke-width="3.7" stroke-linejoin="miter"/>
<path d="M507.74,526.17 A220.80,220.80 0 0 0 587.91,475.05 L541.10,428.18 A154.56,154.56 0 0 1 484.99,463.96 Z" fill="#7cfc00" stroke="#fff" stroke-width="3.7" stroke-linejoin="miter"/>
<path d="M587.91,475.05 A220.80,220.80 0 0 0 637.16,400.16 L575.58,375.75 A154.56,154.56 0 0 1 541.10,428.18 Z" fill="#ffc0cb" stroke="#fff" stroke-width="3.7" stroke-linejoin="miter"/>
<path d="M637.16,400.16 A220.80,220.80 0 0 0 652.70,318.80 L586.46,318.80 A154.56,154.56 0 0 1 575.58,375.75 Z" fill="#ffd700" stroke="#fff" stroke-width="3.7" stroke-linejoin="miter"/>
<path d="M586.46,318.80 A154.56,154.56 0 0 0 531.91,200.96 L474.76,268.30 A66.24,66.24 0 0 1 498.14,318.80 Z" fill="#ff0000" stroke="#fff" stroke-width="3.7" stroke-linejoin="miter"/>
<path d="M531.91,200.96 A154.56,154.56 0 0 0 490.60,175.82 L457.06,257.52 A66.24,66.24 0 0 1 474.76,268.30 Z" fill="#ffff00" stroke="#fff" stroke-width="3.7" stroke-linejoin="miter"/>
<path d="M490.60,175.82 A154.56,154.56 0 0 0 432.87,164.24 L432.32,252.56 A66.24,66.24 0 0 1 457.06,257.52 Z" fill="#6a5acd" stroke="#fff" stroke-width="3.7" stroke-linejoin="miter"/>
<path d="M432.87,164.24 A154.56,154.56 0 0 0 384.14,171.80 L411.43,255.80 A66.24,66.24 0 0 1 432.32,252.56 Z" fill="#008000" stroke="#fff" stroke-width="3.7" stroke-linejoin="miter"/>
<path d="M384.14,171.80 A154.56,154.56 0 0 0 320.57,211.59 L384.19,272.85 A66.24,66.24 0 0 1 411.43,255.80 Z" fill="#ff00ff" stroke="#fff" stroke-width="3.7" stroke-linejoin="miter"/>
<path d="M320.57,211.59 A154.56,154.56 0 0 0 284.03,273.82 L368.53,299.52 A66.24,66.24 0 0 1 384.19,272.85 Z" fill="#00ffff" stroke="#fff" stroke-width="3.7" stroke-linejoin="miter"/>
<path d="M284.03,273.82 A154.56,154.56 0 0 0 277.94,305.22 L365.92,312.98 A66.24,66.24 0 0 1 368.53,299.52 Z" fill="#ff8c00" stroke="#fff" stroke-width="3.7" stroke-linejoin="miter"/>
<path d="M277.94,305.22 A154.56,154.56 0 0 0 385.99,466.38 L412.22,382.05 A66.24,66.24 0 0 1 365.92,312.98 Z" fill="#7cfc00" stroke="#fff" stroke-width="3.7" stroke-linejoin="miter"/>
<path d="M385.99,466.38 A154.56,154.56 0 0 0 583.90,346.81 L497.04,330.80 A66.24,66.24 0 0 1 412.22,382.05 Z" fill="#ffc0cb" stroke="#fff" stroke-width="3.7" stroke-linejoin="miter"/>
<path d="M583.90,346.81 A154.56,154.56 0 0 0 586.46,318.80 L498.14,318.80 A66.24,66.24 0 0 1 497.04,330.80 Z" fill="#ffd700" stroke="#fff" stroke-width="3.7" stroke-linejoin="miter"/>
<text x="592.5" y="227.7" text-anchor="middle" font-size="18.5" textLength="44" lengthAdjust="spacingAndGlyphs" fill="#000">17.3%</text>
<text x="446.3" y="137.7" text-anchor="middle" font-size="18.5" textLength="44" lengthAdjust="spacingAndGlyphs" fill="#000">12.9%</text>
<text x="307.0" y="184.7" text-anchor="middle" font-size="18.5" textLength="44" lengthAdjust="spacingAndGlyphs" fill="#000">12.7%</text>
<text x="245.4" y="304.2" text-anchor="middle" font-size="18.5" textLength="44" lengthAdjust="spacingAndGlyphs" fill="#000">10.6%</text>
<text x="271.6" y="422.4" text-anchor="middle" font-size="18.5" textLength="44" lengthAdjust="spacingAndGlyphs" fill="#000">10.3%</text>
<text x="360.3" y="498.3" text-anchor="middle" font-size="18.5" textLength="35" lengthAdjust="spacingAndGlyphs" fill="#000">9.8%</text>
<text x="456.9" y="510.8" text-anchor="middle" font-size="18.5" textLength="35" lengthAdjust="spacingAndGlyphs" fill="#000">6.9%</text>
<text x="532.8" y="483.0" text-anchor="middle" font-size="18.5" textLength="35" lengthAdjust="spacingAndGlyphs" fill="#000">6.9%</text>
<text x="588.7" y="427.9" text-anchor="middle" font-size="18.5" textLength="35" lengthAdjust="spacingAndGlyphs" fill="#000">6.5%</text>
<text x="616.2" y="360.0" text-anchor="middle" font-size="18.5" textLength="35" lengthAdjust="spacingAndGlyphs" fill="#000">6.0%</text>
<text x="530.1" y="279.4" text-anchor="middle" font-size="18.5" textLength="44" lengthAdjust="spacingAndGlyphs" fill="#000">13.8%</text>
<text x="488.1" y="232.4" text-anchor="middle" font-size="18.5" textLength="35" lengthAdjust="spacingAndGlyphs" fill="#000">5.0%</text>
<text x="453.2" y="218.7" text-anchor="middle" font-size="18.5" textLength="35" lengthAdjust="spacingAndGlyphs" fill="#000">6.1%</text>
<text x="415.3" y="217.9" text-anchor="middle" font-size="18.5" textLength="35" lengthAdjust="spacingAndGlyphs" fill="#000">5.1%</text>
<text x="374.5" y="233.1" text-anchor="middle" font-size="18.5" textLength="35" lengthAdjust="spacingAndGlyphs" fill="#000">7.8%</text>
<text x="338.6" y="270.0" text-anchor="middle" font-size="18.5" textLength="35" lengthAdjust="spacingAndGlyphs" fill="#000">7.5%</text>
<text x="325.7" y="304.2" text-anchor="middle" font-size="18.5" textLength="35" lengthAdjust="spacingAndGlyphs" fill="#000">3.3%</text>
<text x="342.0" y="385.0" text-anchor="middle" font-size="18.5" textLength="44" lengthAdjust="spacingAndGlyphs" fill="#000">21.6%</text>
<text x="487.8" y="417.4" text-anchor="middle" font-size="18.5" textLength="44" lengthAdjust="spacingAndGlyphs" fill="#000">26.9%</text>
<text x="539.6" y="334.6" text-anchor="middle" font-size="18.5" textLength="35" lengthAdjust="spacingAndGlyphs" fill="#000">2.9%</text>
<text x="113" y="40.5" font-size="17" textLength="33" lengthAdjust="spacingAndGlyphs" fill="#000">地区</text>
<rect x="43" y="55.8" width="32" height="9.4" fill="#ff0000"/>
<text x="93" y="66.8" font-size="17" textLength="50.9" lengthAdjust="spacingAndGlyphs" fill="#000">广东省</text>
<rect x="43" y="82.8" width="32" height="9.4" fill="#ffff00"/>
<text x="93" y="93.8" font-size="17" textLength="50.9" lengthAdjust="spacingAndGlyphs" fill="#000">山东省</text>
<rect x="43" y="107.8" width="32" height="9.4" fill="#6a5acd"/>
<text x="93" y="118.8" font-size="17" textLength="50.9" lengthAdjust="spacingAndGlyphs" fill="#000">湖北省</text>
<rect x="43" y="133.8" width="32" height="9.4" fill="#008000"/>
<text x="93" y="144.8" font-size="17" textLength="50.9" lengthAdjust="spacingAndGlyphs" fill="#000">江苏省</text>
<rect x="43" y="159.3" width="32" height="9.4" fill="#ff00ff"/>
<text x="93" y="170.3" font-size="17" textLength="50.9" lengthAdjust="spacingAndGlyphs" fill="#000">浙江省</text>
<rect x="43" y="183.3" width="32" height="9.4" fill="#00ffff"/>
<text x="93" y="194.3" font-size="17" textLength="50.9" lengthAdjust="spacingAndGlyphs" fill="#000">河北省</text>
<rect x="43" y="209.3" width="32" height="9.4" fill="#ff8c00"/>
<text x="93" y="220.3" font-size="17" textLength="122.1" lengthAdjust="spacingAndGlyphs" fill="#000">广西壮族自治区</text>
<rect x="43" y="237.3" width="32" height="9.4" fill="#7cfc00"/>
<text x="93" y="248.3" font-size="17" textLength="33.1" lengthAdjust="spacingAndGlyphs" fill="#000">上海</text>
<rect x="43" y="263.3" width="32" height="9.4" fill="#ffc0cb"/>
<text x="93" y="274.3" font-size="17" textLength="33.1" lengthAdjust="spacingAndGlyphs" fill="#000">北京</text>
<rect x="43" y="288.3" width="32" height="9.4" fill="#ffd700"/>
<text x="93" y="299.3" font-size="17" textLength="50.9" lengthAdjust="spacingAndGlyphs" fill="#000">四川省</text>
<text x="257" y="64" font-size="21" textLength="348" lengthAdjust="spacingAndGlyphs" fill="#000">2020年1月2月各省销量占比情况分析</text>
</svg>
<div class="a" style="left:1910px;top:458px;width:150px;height:772px;overflow:hidden">
<svg style="left:30px;top:-32px" width="78" height="72" viewBox="0 0 78 72"><rect width="78" height="72" fill="#fff"/><defs><linearGradient id="sh-32" x1="0" x2="1"><stop offset="0" stop-color="#fff"/><stop offset="1" stop-color="#b8b8b8"/></linearGradient></defs><rect x="68" width="10" height="72" fill="url(#sh-32)"/><rect x="18" y="56" width="5" height="6" fill="#7b7bf0"/><rect x="27" y="52" width="5" height="10" fill="#7b7bf0"/><rect x="36" y="46" width="5" height="16" fill="#7b7bf0"/><rect x="45" y="45" width="5" height="17" fill="#7b7bf0"/><rect x="54" y="32" width="5" height="30" fill="#7b7bf0"/><rect x="63" y="22" width="5" height="40" fill="#7b7bf0"/><path d="M10 0V62H72" stroke="#999" stroke-width="0.6" fill="none"/></svg>
<svg style="left:30px;top:86px" width="78" height="72" viewBox="0 0 78 72"><rect width="78" height="72" fill="#fff"/><defs><linearGradient id="sh86" x1="0" x2="1"><stop offset="0" stop-color="#fff"/><stop offset="1" stop-color="#b8b8b8"/></linearGradient></defs><rect x="68" width="10" height="72" fill="url(#sh86)"/><rect x="18" y="62" width="2.5" height="2" fill="#f0a040"/><rect x="20.5" y="62" width="2.5" height="2" fill="#30b8e8"/><rect x="23" y="62" width="2.5" height="2" fill="#008000"/><rect x="27" y="61" width="2.5" height="3" fill="#f0a040"/><rect x="29.5" y="56" width="2.5" height="8" fill="#30b8e8"/><rect x="32" y="62" width="2.5" height="2" fill="#008000"/><rect x="36" y="58" width="2.5" height="6" fill="#f0a040"/><rect x="38.5" y="54" width="2.5" height="10" fill="#30b8e8"/><rect x="41" y="61" width="2.5" height="3" fill="#008000"/><rect x="45" y="58" width="2.5" height="6" fill="#f0a040"/><rect x="47.5" y="54" width="2.5" height="10" fill="#30b8e8"/><rect x="50" y="61" width="2.5" height="3" fill="#008000"/><rect x="54" y="44" width="2.5" height="20" fill="#f0a040"/><rect x="56.5" y="50" width="2.5" height="14" fill="#30b8e8"/><rect x="59" y="60" width="2.5" height="4" fill="#008000"/><rect x="63" y="8" width="2.5" height="56" fill="#f0a040"/><rect x="65.5" y="42" width="2.5" height="22" fill="#30b8e8"/><rect x="68" y="56" width="2.5" height="8" fill="#008000"/><path d="M10 8V64H72" stroke="#999" stroke-width="0.6" fill="none"/><rect x="13" y="10" width="6" height="2" fill="#f0a040"/><rect x="13" y="14" width="6" height="2" fill="#30b8e8"/><rect x="13" y="18" width="6" height="2" fill="#008000"/><rect x="28" y="5" width="40" height="1.5" fill="#bbb"/></svg>
<svg style="left:30px;top:205px" width="78" height="72" viewBox="0 0 78 72"><rect width="78" height="72" fill="#fff"/><defs><linearGradient id="sh205" x1="0" x2="1"><stop offset="0" stop-color="#fff"/><stop offset="1" stop-color="#b8b8b8"/></linearGradient></defs><rect x="68" width="10" height="72" fill="url(#sh205)"/><g transform="translate(49.4,36.5) scale(1,1.28) translate(-49.4,-36.5)"><path d="M49.4,36.5 L49.4,17.0 A19.5,19.5 0 0 1 56.6,18.4Z" fill="#ffd700"/><path d="M49.4,36.5 L56.6,18.4 A19.5,19.5 0 0 1 63.2,22.7Z" fill="#ffc0cb"/><path d="M49.4,36.5 L63.2,22.7 A19.5,19.5 0 0 1 67.7,29.8Z" fill="#7cfc00"/><path d="M49.4,36.5 L67.7,29.8 A19.5,19.5 0 0 1 68.8,38.1Z" fill="#ff8c00"/><path d="M49.4,36.5 L68.8,38.1 A19.5,19.5 0 0 1 64.3,49.1Z" fill="#00ffff"/><path d="M49.4,36.5 L64.3,49.1 A19.5,19.5 0 0 1 53.7,55.5Z" fill="#ff00ff"/><path d="M49.4,36.5 L53.7,55.5 A19.5,19.5 0 0 1 41.0,54.1Z" fill="#008000"/><path d="M49.4,36.5 L41.0,54.1 A19.5,19.5 0 0 1 30.9,42.8Z" fill="#6a5acd"/><path d="M49.4,36.5 L30.9,42.8 A19.5,19.5 0 0 1 32.1,27.4Z" fill="#ffff00"/><path d="M49.4,36.5 L32.1,27.4 A19.5,19.5 0 0 1 49.4,17.0Z" fill="#ff0000"/></g><rect x="33" y="11" width="6" height="1.6" fill="#999"/><rect x="58" y="11" width="5" height="1.6" fill="#999"/><rect x="63" y="17" width="4" height="1.6" fill="#999"/><rect x="64" y="27" width="5" height="1.6" fill="#999"/><rect x="66" y="36" width="6" height="1.6" fill="#999"/><rect x="64" y="45" width="5" height="1.6" fill="#999"/><rect x="60" y="54" width="5" height="1.6" fill="#999"/><rect x="45" y="60" width="5" height="1.6" fill="#999"/><rect x="33" y="54" width="5" height="1.6" fill="#999"/><rect x="25" y="44" width="6" height="1.6" fill="#999"/><rect x="24" y="33" width="5" height="1.6" fill="#999"/><rect x="25.5" y="4.3" width="47" height="1.8" fill="#aaa"/></svg>
<svg style="left:30px;top:323px" width="78" height="72" viewBox="0 0 78 72"><rect width="78" height="72" fill="#fff"/><defs><linearGradient id="sh323" x1="0" x2="1"><stop offset="0" stop-color="#fff"/><stop offset="1" stop-color="#b8b8b8"/></linearGradient></defs><rect x="68" width="10" height="72" fill="url(#sh323)"/><g transform="translate(49.4,36.5) scale(1,1.28) translate(-49.4,-36.5)"><path d="M49.4,36.5 L49.4,17.0 A19.5,19.5 0 0 1 56.6,18.4Z" fill="#ffd700"/><path d="M49.4,36.5 L56.6,18.4 A19.5,19.5 0 0 1 63.2,22.7Z" fill="#ffc0cb"/><path d="M49.4,36.5 L63.2,22.7 A19.5,19.5 0 0 1 67.7,29.8Z" fill="#7cfc00"/><path d="M49.4,36.5 L67.7,29.8 A19.5,19.5 0 0 1 68.8,38.1Z" fill="#ff8c00"/><path d="M49.4,36.5 L68.8,38.1 A19.5,19.5 0 0 1 64.3,49.1Z" fill="#00ffff"/><path d="M49.4,36.5 L64.3,49.1 A19.5,19.5 0 0 1 53.7,55.5Z" fill="#ff00ff"/><path d="M49.4,36.5 L53.7,55.5 A19.5,19.5 0 0 1 41.0,54.1Z" fill="#008000"/><path d="M49.4,36.5 L41.0,54.1 A19.5,19.5 0 0 1 30.9,42.8Z" fill="#6a5acd"/><path d="M49.4,36.5 L30.9,42.8 A19.5,19.5 0 0 1 32.1,27.4Z" fill="#ffff00"/><path d="M47.6,33.5 L30.3,24.5 A19.5,19.5 0 0 1 47.6,14.0Z" fill="#ff0000"/></g><rect x="33" y="11" width="6" height="1.6" fill="#999"/><rect x="58" y="11" width="5" height="1.6" fill="#999"/><rect x="63" y="17" width="4" height="1.6" fill="#999"/><rect x="64" y="27" width="5" height="1.6" fill="#999"/><rect x="66" y="36" width="6" height="1.6" fill="#999"/><rect x="64" y="45" width="5" height="1.6" fill="#999"/><rect x="60" y="54" width="5" height="1.6" fill="#999"/><rect x="45" y="60" width="5" height="1.6" fill="#999"/><rect x="33" y="54" width="5" height="1.6" fill="#999"/><rect x="25" y="44" width="6" height="1.6" fill="#999"/><rect x="24" y="33" width="5" height="1.6" fill="#999"/><rect x="25.5" y="4.3" width="47" height="1.8" fill="#aaa"/></svg>
<svg style="left:30px;top:442px" width="78" height="72" viewBox="0 0 78 72"><rect width="78" height="72" fill="#fff"/><defs><linearGradient id="sh442" x1="0" x2="1"><stop offset="0" stop-color="#fff"/><stop offset="1" stop-color="#b8b8b8"/></linearGradient></defs><rect x="68" width="10" height="72" fill="url(#sh442)"/><g transform="translate(49.4,36.5) scale(1,1.28) translate(-49.4,-36.5)"><path d="M49.4,36.5 L49.4,17.0 A19.5,19.5 0 0 1 56.6,18.4Z" fill="#ffd700"/><path d="M49.4,36.5 L56.6,18.4 A19.5,19.5 0 0 1 63.2,22.7Z" fill="#ffc0cb"/><path d="M49.4,36.5 L63.2,22.7 A19.5,19.5 0 0 1 67.7,29.8Z" fill="#7cfc00"/><path d="M49.4,36.5 L67.7,29.8 A19.5,19.5 0 0 1 68.8,38.1Z" fill="#ff8c00"/><path d="M49.4,36.5 L68.8,38.1 A19.5,19.5 0 0 1 64.3,49.1Z" fill="#00ffff"/><path d="M49.4,36.5 L64.3,49.1 A19.5,19.5 0 0 1 53.7,55.5Z" fill="#ff00ff"/><path d="M49.4,36.5 L53.7,55.5 A19.5,19.5 0 0 1 41.0,54.1Z" fill="#008000"/><path d="M49.4,36.5 L41.0,54.1 A19.5,19.5 0 0 1 30.9,42.8Z" fill="#6a5acd"/><path d="M49.4,36.5 L30.9,42.8 A19.5,19.5 0 0 1 32.1,27.4Z" fill="#ffff00"/><path d="M47.6,33.5 L30.3,24.5 A19.5,19.5 0 0 1 47.6,14.0Z" fill="#ff0000"/></g><rect x="33" y="11" width="6" height="1.6" fill="#999"/><rect x="58" y="11" width="5" height="1.6" fill="#999"/><rect x="63" y="17" width="4" height="1.6" fill="#999"/><rect x="64" y="27" width="5" height="1.6" fill="#999"/><rect x="66" y="36" width="6" height="1.6" fill="#999"/><rect x="64" y="45" width="5" height="1.6" fill="#999"/><rect x="60" y="54" width="5" height="1.6" fill="#999"/><rect x="45" y="60" width="5" height="1.6" fill="#999"/><rect x="33" y="54" width="5" height="1.6" fill="#999"/><rect x="25" y="44" width="6" height="1.6" fill="#999"/><rect x="24" y="33" width="5" height="1.6" fill="#999"/><rect x="25.5" y="4.3" width="47" height="1.8" fill="#aaa"/></svg>
<svg style="left:30px;top:560px" width="78" height="72" viewBox="0 0 78 72"><rect width="78" height="72" fill="#fff"/><defs><linearGradient id="sh560" x1="0" x2="1"><stop offset="0" stop-color="#fff"/><stop offset="1" stop-color="#b8b8b8"/></linearGradient></defs><rect x="68" width="10" height="72" fill="url(#sh560)"/><path d="M32.1,36.4 A17.5,22.2 0 0 0 41.5,56.1 L45.2,47.4 A9.4,12.4 0 0 1 40.2,36.4Z" fill="#ff0000" stroke="#fff" stroke-width="0.4"/><path d="M41.5,56.1 A17.5,22.2 0 0 0 55.2,57.4 L52.6,48.1 A9.4,12.4 0 0 1 45.2,47.4Z" fill="#ffff00" stroke="#fff" stroke-width="0.4"/><path d="M55.2,57.4 A17.5,22.2 0 0 0 65.4,45.9 L58.1,41.7 A9.4,12.4 0 0 1 52.6,48.1Z" fill="#6a5acd" stroke="#fff" stroke-width="0.4"/><path d="M65.4,45.9 A17.5,22.2 0 0 0 66.7,31.5 L58.8,33.7 A9.4,12.4 0 0 1 58.1,41.7Z" fill="#008000" stroke="#fff" stroke-width="0.4"/><path d="M66.7,31.5 A17.5,22.2 0 0 0 60.9,19.4 L55.7,26.9 A9.4,12.4 0 0 1 58.8,33.7Z" fill="#ff00ff" stroke="#fff" stroke-width="0.4"/><path d="M60.9,19.4 A17.5,22.2 0 0 0 51.1,14.3 L50.4,24.0 A9.4,12.4 0 0 1 55.7,26.9Z" fill="#00ffff" stroke="#fff" stroke-width="0.4"/><path d="M51.1,14.3 A17.5,22.2 0 0 0 43.6,15.6 L46.4,24.8 A9.4,12.4 0 0 1 50.4,24.0Z" fill="#ff8c00" stroke="#fff" stroke-width="0.4"/><path d="M43.6,15.6 A17.5,22.2 0 0 0 37.2,20.7 L43.0,27.6 A9.4,12.4 0 0 1 46.4,24.8Z" fill="#7cfc00" stroke="#fff" stroke-width="0.4"/><path d="M37.2,20.7 A17.5,22.2 0 0 0 33.3,28.2 L40.9,31.8 A9.4,12.4 0 0 1 43.0,27.6Z" fill="#ffc0cb" stroke="#fff" stroke-width="0.4"/><path d="M33.3,28.2 A17.5,22.2 0 0 0 32.1,36.4 L40.2,36.4 A9.4,12.4 0 0 1 40.9,31.8Z" fill="#ffd700" stroke="#fff" stroke-width="0.4"/><rect x="31" y="12" width="15" height="1.6" fill="#aaa"/><rect x="57" y="13" width="6" height="1.6" fill="#aaa"/><rect x="67" y="23" width="6" height="1.6" fill="#aaa"/><rect x="71" y="38" width="6" height="1.6" fill="#aaa"/><rect x="64" y="52" width="7" height="1.6" fill="#aaa"/><rect x="41" y="61" width="8" height="1.6" fill="#aaa"/><rect x="26" y="50" width="7" height="1.6" fill="#aaa"/><rect x="23" y="30" width="8" height="1.6" fill="#aaa"/><rect x="29" y="21" width="5" height="1.6" fill="#aaa"/><rect x="26" y="5.5" width="47" height="1.8" fill="#aaa"/></svg>
<svg style="left:30px;top:679px" width="78" height="72" viewBox="0 0 78 72"><rect width="78" height="72" fill="#fff"/><defs><linearGradient id="sh679" x1="0" x2="1"><stop offset="0" stop-color="#fff"/><stop offset="1" stop-color="#b8b8b8"/></linearGradient></defs><rect x="68" width="10" height="72" fill="url(#sh679)"/><path d="M74.4,36.8 A24.4,24.4 0 0 0 61.3,15.2 L57.9,21.7 A17.08,17.08 0 0 1 67.1,36.8Z" fill="#ff0000" stroke="#fff" stroke-width="0.3"/><path d="M61.3,15.2 A24.4,24.4 0 0 0 42.1,13.7 L44.5,20.6 A17.08,17.08 0 0 1 57.9,21.7Z" fill="#ffff00" stroke="#fff" stroke-width="0.3"/><path d="M42.1,13.7 A24.4,24.4 0 0 0 28.0,26.3 L34.6,29.5 A17.08,17.08 0 0 1 44.5,20.6Z" fill="#6a5acd" stroke="#fff" stroke-width="0.3"/><path d="M28.0,26.3 A24.4,24.4 0 0 0 26.2,42.2 L33.3,40.6 A17.08,17.08 0 0 1 34.6,29.5Z" fill="#008000" stroke="#fff" stroke-width="0.3"/><path d="M26.2,42.2 A24.4,24.4 0 0 0 34.3,55.5 L39.0,49.9 A17.08,17.08 0 0 1 33.3,40.6Z" fill="#ff00ff" stroke="#fff" stroke-width="0.3"/><path d="M34.3,55.5 A24.4,24.4 0 0 0 48.0,61.1 L48.6,53.8 A17.08,17.08 0 0 1 39.0,49.9Z" fill="#00ffff" stroke="#fff" stroke-width="0.3"/><path d="M48.0,61.1 A24.4,24.4 0 0 0 58.4,59.7 L55.9,52.8 A17.08,17.08 0 0 1 48.6,53.8Z" fill="#ff8c00" stroke="#fff" stroke-width="0.3"/><path d="M58.4,59.7 A24.4,24.4 0 0 0 67.2,54.1 L62.1,48.9 A17.08,17.08 0 0 1 55.9,52.8Z" fill="#7cfc00" stroke="#fff" stroke-width="0.3"/><path d="M67.2,54.1 A24.4,24.4 0 0 0 72.7,45.8 L65.9,43.1 A17.08,17.08 0 0 1 62.1,48.9Z" fill="#ffc0cb" stroke="#fff" stroke-width="0.3"/><path d="M72.7,45.8 A24.4,24.4 0 0 0 74.4,36.8 L67.1,36.8 A17.08,17.08 0 0 1 65.9,43.1Z" fill="#ffd700" stroke="#fff" stroke-width="0.3"/><path d="M67.1,36.8 A17.08,17.08 0 0 0 61.1,23.8 L54.7,31.2 A7.319999999999999,7.319999999999999 0 0 1 57.3,36.8Z" fill="#ff0000" stroke="#fff" stroke-width="0.3"/><path d="M61.1,23.8 A17.08,17.08 0 0 0 56.5,21.0 L52.8,30.0 A7.319999999999999,7.319999999999999 0 0 1 54.7,31.2Z" fill="#ffff00" stroke="#fff" stroke-width="0.3"/><path d="M56.5,21.0 A17.08,17.08 0 0 0 50.1,19.7 L50.0,29.5 A7.319999999999999,7.319999999999999 0 0 1 52.8,30.0Z" fill="#6a5acd" stroke="#fff" stroke-width="0.3"/><path d="M50.1,19.7 A17.08,17.08 0 0 0 44.7,20.6 L47.7,29.8 A7.319999999999999,7.319999999999999 0 0 1 50.0,29.5Z" fill="#008000" stroke="#fff" stroke-width="0.3"/><path d="M44.7,20.6 A17.08,17.08 0 0 0 37.7,25.0 L44.7,31.7 A7.319999999999999,7.319999999999999 0 0 1 47.7,29.8Z" fill="#ff00ff" stroke="#fff" stroke-width="0.3"/><path d="M37.7,25.0 A17.08,17.08 0 0 0 33.7,31.8 L43.0,34.7 A7.319999999999999,7.319999999999999 0 0 1 44.7,31.7Z" fill="#00ffff" stroke="#fff" stroke-width="0.3"/><path d="M33.7,31.8 A17.08,17.08 0 0 0 33.0,35.3 L42.7,36.2 A7.319999999999999,7.319999999999999 0 0 1 43.0,34.7Z" fill="#ff8c00" stroke="#fff" stroke-width="0.3"/><path d="M33.0,35.3 A17.08,17.08 0 0 0 44.9,53.1 L47.8,43.8 A7.319999999999999,7.319999999999999 0 0 1 42.7,36.2Z" fill="#7cfc00" stroke="#fff" stroke-width="0.3"/><path d="M44.9,53.1 A17.08,17.08 0 0 0 66.8,39.9 L57.2,38.1 A7.319999999999999,7.319999999999999 0 0 1 47.8,43.8Z" fill="#ffc0cb" stroke="#fff" stroke-width="0.3"/><path d="M66.8,39.9 A17.08,17.08 0 0 0 67.1,36.8 L57.3,36.8 A7.319999999999999,7.319999999999999 0 0 1 57.2,38.1Z" fill="#ffd700" stroke="#fff" stroke-width="0.3"/><rect x="4" y="6.0" width="4" height="1.2" fill="#ff0000"/><rect x="10" y="6.0" width="7" height="1" fill="#999"/><rect x="4" y="8.2" width="4" height="1.2" fill="#ffff00"/><rect x="10" y="8.2" width="7" height="1" fill="#999"/><rect x="4" y="10.4" width="4" height="1.2" fill="#6a5acd"/><rect x="10" y="10.4" width="7" height="1" fill="#999"/><rect x="4" y="12.6" width="4" height="1.2" fill="#008000"/><rect x="10" y="12.6" width="7" height="1" fill="#999"/><rect x="4" y="14.8" width="4" height="1.2" fill="#ff00ff"/><rect x="10" y="14.8" width="7" height="1" fill="#999"/><rect x="4" y="17.0" width="4" height="1.2" fill="#00ffff"/><rect x="10" y="17.0" width="7" height="1" fill="#999"/><rect x="4" y="19.2" width="4" height="1.2" fill="#ff8c00"/><rect x="10" y="19.2" width="7" height="1" fill="#999"/><rect x="4" y="21.4" width="4" height="1.2" fill="#7cfc00"/><rect x="10" y="21.4" width="7" height="1" fill="#999"/><rect x="4" y="23.6" width="4" height="1.2" fill="#ffc0cb"/><rect x="10" y="23.6" width="7" height="1" fill="#999"/><rect x="4" y="25.8" width="4" height="1.2" fill="#ffd700"/><rect x="10" y="25.8" width="7" height="1" fill="#999"/><rect x="33" y="8" width="32" height="1.2" fill="#bbb"/></svg>
</div>
<div class="a" style="left:1px;top:1244px;width:2120px;height:1px;background:#1e1f22"></div>
<div class="a" style="left:1px;top:1245px;width:2120px;height:43px;background:#2b2d30"></div>
<div class="a" style="left:22px;top:1260px;width:12px;height:12px;border:2px solid #548af7;border-radius:2px"></div>
<div class="t" style="left:41px;top:1255.5px;font-size:19px;color:#a8abb0;transform:scaleX(0.9894);transform-origin:0 0">test</div>
<div class="t" style="left:109px;top:1255.5px;font-size:19px;color:#a8abb0;transform:scaleX(0.9395);transform-origin:0 0">爬虫教程</div>
<div class="t" style="left:216.7px;top:1255.5px;font-size:19px;color:#a8abb0;transform:scaleX(0.9739);transform-origin:0 0">示例源码--Python网络爬虫从入门到精通</div>
<div class="t" style="left:583.4px;top:1255.5px;font-size:19px;color:#a8abb0;transform:scaleX(0.9744);transform-origin:0 0">14</div>
<div class="t" style="left:642px;top:1255.5px;font-size:19px;color:#a8abb0;transform:scaleX(0.9697);transform-origin:0 0">18</div>
<div class="t" style="left:730px;top:1255.5px;font-size:19px;color:#a8abb0;transform:scaleX(1.0429);transform-origin:0 0">demo.py</div>
<svg style="left:86px;top:1258px" width="9" height="14" viewBox="0 0 9 14"><path d="M1.5 1L7.5 7L1.5 13" class="ic" style="stroke:#8c8f96;stroke-width:1.6"/></svg>
<svg style="left:195px;top:1258px" width="9" height="14" viewBox="0 0 9 14"><path d="M1.5 1L7.5 7L1.5 13" class="ic" style="stroke:#8c8f96;stroke-width:1.6"/></svg>
<svg style="left:560px;top:1258px" width="9" height="14" viewBox="0 0 9 14"><path d="M1.5 1L7.5 7L1.5 13" class="ic" style="stroke:#8c8f96;stroke-width:1.6"/></svg>
<svg style="left:619px;top:1258px" width="9" height="14" viewBox="0 0 9 14"><path d="M1.5 1L7.5 7L1.5 13" class="ic" style="stroke:#8c8f96;stroke-width:1.6"/></svg>
<svg style="left:678px;top:1258px" width="9" height="14" viewBox="0 0 9 14"><path d="M1.5 1L7.5 7L1.5 13" class="ic" style="stroke:#8c8f96;stroke-width:1.6"/></svg>
<svg style="left:701px;top:1254px" width="22" height="22" viewBox="0 0 27 27"><path d="M13 1C8 1 7 3 7 5V8H14V9.5H4C1.5 9.5 0.5 11.5 0.5 14.5C0.5 17.5 1.5 19.5 4 19.5H7V16C7 13.8 8.5 12.5 10.5 12.5H16.5C18.5 12.5 20 11 20 9V5C20 3 18.5 1 13 1Z" fill="#3d7ab0"/><path d="M14 26C19 26 20 24 20 22V19H13V17.5H23C25.5 17.5 26.5 15.5 26.5 12.5C26.5 9.5 25.5 7.5 23 7.5H20V11C20 13.2 18.5 14.5 16.5 14.5H10.5C8.5 14.5 7 16 7 18V22C7 24 8.5 26 14 26Z" fill="#f0c63e"/><circle cx="10" cy="4.5" r="1.3" fill="#2b2d30"/><circle cx="17" cy="22.5" r="1.3" fill="#2b2d30"/></svg>
<div class="t" style="left:1579.7px;top:1255.5px;font-size:19px;color:#a8abb0;transform:scaleX(0.8818);transform-origin:0 0">1:1</div>
<div class="t" style="left:1629px;top:1255.5px;font-size:19px;color:#a8abb0;transform:scaleX(0.8665);transform-origin:0 0">CRLF</div>
<div class="t" style="left:1696px;top:1255.5px;font-size:19px;color:#a8abb0;transform:scaleX(0.9660);transform-origin:0 0">UTF-8</div>
<div class="t" style="left:1773px;top:1255.5px;font-size:19px;color:#a8abb0;transform:scaleX(0.9608);transform-origin:0 0">4 个空格</div>
<div class="t" style="left:1867px;top:1255.5px;font-size:19px;color:#a8abb0;transform:scaleX(1.0109);transform-origin:0 0">Python 3.11 (test) (2)</div>
<svg style="left:2060px;top:1245px" width="61" height="43" viewBox="2060 1245 61 43"><g fill="none" stroke="#ced0d6" stroke-width="1.7" stroke-linecap="round"><rect x="2076" y="1263.5" width="14.4" height="11" rx="2.6"/><path d="M2086.6 1263.3V1261.2C2086.6 1258.9 2088.4 1257.4 2090.5 1257.4C2092.6 1257.4 2094.4 1258.9 2094.4 1261.2V1263.3"/><path d="M2083.1 1267.3V1270.6"/></g></svg>
<div class="a" style="left:0;top:1288px;width:2121px;height:72px;background:linear-gradient(90deg,#2a1b29 0%,#2c1a27 25%,#3a1d1c 45%,#3d1c16 60%,#3b1c15 85%,#351a17 100%)"></div>
<div class="a" style="left:0;top:1288px;width:2121px;height:1px;background:#4a3433"></div>
<div class="a" style="left:33px;top:1307px;width:31px;height:31px;border-radius:50%;background:radial-gradient(circle at 40% 30%,#f6c93c,#f08a1c 60%,#e0661a)"></div>
<div class="a" style="left:46px;top:1297px;width:24px;height:24px;border-radius:50%;background:#f4a0a6"></div>
<div class="t" style="left:46px;top:1302px;width:24px;text-align:center;font-size:14px;color:#222">1</div>
<div class="t" style="left:77px;top:1303px;font-size:18px;color:#fff;transform:scaleX(0.8702);transform-origin:0 0">14°C</div>
<div class="t" style="left:77px;top:1326.5px;font-size:18px;color:#d0d0d0;transform:scaleX(0.9722);transform-origin:0 0">晴朗</div>
<svg style="left:676px;top:1307px" width="36" height="36" viewBox="0 0 36 36"><defs><linearGradient id="wg" x1="0" y1="0" x2="1" y2="1"><stop offset="0" stop-color="#7fe3ff"/><stop offset="1" stop-color="#1a9df0"/></linearGradient></defs><rect x="0" y="0" width="17" height="17" rx="1.5" fill="url(#wg)"/><rect x="19" y="0" width="17" height="17" rx="1.5" fill="url(#wg)"/><rect x="0" y="19" width="17" height="17" rx="1.5" fill="url(#wg)"/><rect x="19" y="19" width="17" height="17" rx="1.5" fill="url(#wg)"/></svg>
<div class="a" style="left:733px;top:1300px;width:328px;height:48px;border-radius:24px;background:#4e3b30;border:1px solid #5e4a3e"></div>
<svg style="left:749px;top:1312px" width="24" height="24" viewBox="0 0 24 24"><g fill="none" stroke="#e8e8e8" stroke-width="2.4"><circle cx="10" cy="10" r="8"/><path d="M16 16L22 22" stroke-linecap="round"/></g></svg>
<div class="t" style="left:788px;top:1313px;font-size:22px;color:#e0e0e0">搜索</div>
<div class="a" style="left:981px;top:1306px;width:77px;height:36px;border-radius:18px;background:#5a4535"></div>
<svg style="left:1001px;top:1311px" width="35" height="28" viewBox="0 0 35 28"><rect x="11" y="1" width="12" height="6" rx="2" fill="none" stroke="#333" stroke-width="2"/><rect x="1" y="6" width="33" height="21" rx="2" fill="#e0901a"/><rect x="1" y="6" width="33" height="9" fill="#f0a52a"/><rect x="15" y="12" width="5" height="5" fill="#f8d040"/></svg>
<svg style="left:1080px;top:1307px" width="38" height="36" viewBox="0 0 38 36"><rect x="1" y="10" width="26" height="25" rx="3" fill="#6e6e6e"/><rect x="12" y="1" width="25" height="24" rx="3" fill="#f0f0f0"/><rect x="12" y="10" width="15" height="15" fill="#c8c8c8"/></svg>
<svg style="left:1145px;top:1307px" width="38" height="36" viewBox="0 0 38 36"><path d="M1 4C1 2.5 2 1.5 3.5 1.5H14L17 4.5H34.5C36 4.5 37 5.5 37 7V33C37 34.5 36 35.5 34.5 35.5H3.5C2 35.5 1 34.5 1 33Z" fill="#f4b83f"/><rect x="1" y="9" width="36" height="26.5" rx="2" fill="#ffd866"/><path d="M7 35.5V27C7 25.5 8 24.5 9.5 24.5H28.5C30 24.5 31 25.5 31 27V35.5Z" fill="#1f78d1"/><rect x="12" y="28" width="14" height="2" fill="#5ab0f0"/></svg>
<svg style="left:1210px;top:1305px" width="38" height="38" viewBox="0 0 38 38"><defs><linearGradient id="eg" x1="0" y1="0" x2="1" y2="1"><stop offset="0" stop-color="#40d8a0"/><stop offset="0.5" stop-color="#1ea0e0"/><stop offset="1" stop-color="#0c5fc0"/></linearGradient></defs><path d="M19 1C29 1 37 8 37 17C37 23 32 26 27 26C22 26 20 23 20 21C20 19 22 18 24 18C26 18 27 17 27 15C27 10 23 6 17 6C9 6 3 12 2 18C3 8 10 1 19 1Z" fill="url(#eg)"/><path d="M2 18C2 29 10 37 20 37C26 37 31 34 34 30C30 32 24 32 20 29C15 26 13 20 16 15C10 16 5 20 8 27C4 24 2 21 2 18Z" fill="#1a6fd0"/><rect x="3" y="24" width="16" height="13" rx="2" fill="#e0901a"/><rect x="8" y="21" width="6" height="4" fill="none" stroke="#555" stroke-width="1.5"/></svg>
<svg style="left:1277px;top:1305px" width="36" height="38" viewBox="0 0 36 38"><path d="M11 8V5C11 2.5 13 1 18 1S25 2.5 25 5V8" fill="none" stroke="#2aa0e8" stroke-width="2.5"/><rect x="1" y="7" width="34" height="30" rx="4" fill="#f4f4f4"/><rect x="10" y="14" width="7.5" height="7.5" fill="#f25022"/><rect x="18.5" y="14" width="7.5" height="7.5" fill="#7fba00"/><rect x="10" y="22.5" width="7.5" height="7.5" fill="#00a4ef"/><rect x="18.5" y="22.5" width="7.5" height="7.5" fill="#ffb900"/></svg>
<svg style="left:1344px;top:1305px" width="37" height="38" viewBox="0 0 37 38"><path d="M27 1L36 5V33L27 37L10 21L4 26L1 24.5V13.5L4 12L10 17Z" fill="#9a5de0"/><path d="M27 10L17 19L27 28Z" fill="#4f2a90"/><path d="M1 13.5L4 12L10 17L4 22Z" fill="#c48cf5"/><path d="M27 1L36 5V33L27 37Z" fill="#b07af0"/></svg>
<div class="a" style="left:1397px;top:1295px;width:61px;height:58px;border-radius:6px;background:#4b3632"></div>
<svg style="left:1407px;top:1302px" width="42" height="42" viewBox="17 16 28 28"><defs><linearGradient id="lg2" x1="0" y1="0" x2="1" y2="1"><stop offset="0" stop-color="#5ef07a"/><stop offset="0.5" stop-color="#21d789"/><stop offset="1" stop-color="#1fc98a"/></linearGradient></defs>
<path d="M19.9 21L27.9 18.1L36.9 17.8L38.5 23.5L43 27.3L42.4 39.5L30 41.6L27.3 41.6L19.1 37.4Z" fill="url(#lg2)"/>
<path d="M38 23.2L43 27.3L42.6 39.4L33 41.5L26.5 41L26 36L37.8 36.7Z" fill="#f6f84a"/>
<path d="M30 17.9L36.9 17.8L38 23.5L31 23.2Z" fill="#9ff060"/>
<path d="M37.8 23.9L43 27.3L40.2 31Z" fill="#0fd7f8"/>
<rect x="24" y="23.1" width="13.8" height="13.6" fill="#000"/>
<text x="25" y="30.2" font-size="7.6" font-weight="bold" fill="#fff" font-family="Liberation Sans" textLength="10.5" lengthAdjust="spacingAndGlyphs">PC</text>
<rect x="25.1" y="34.2" width="5.9" height="1.8" fill="#ddd"/></svg>
<div class="a" style="left:1416px;top:1347px;width:24px;height:4px;border-radius:2px;background:#e07ee8"></div>
<svg style="left:1840px;top:1315px" width="20" height="13" viewBox="0 0 20 13"><path d="M2 11L10 3L18 11" fill="none" stroke="#fff" stroke-width="2"/></svg>
<div class="t" style="left:1885.5px;top:1312.5px;font-size:22px;color:#fff">中</div>
<svg style="left:1933px;top:1310px" width="26" height="27" viewBox="0 0 26 27"><g fill="none" stroke="#fff" stroke-width="1.6"><path d="M17 2H2V18H19V12"/><path d="M8 18V23H14M6 23H16M17 23V9"/><rect x="16" y="2" width="7" height="9" rx="2"/><path d="M19.5 4V7"/></g></svg>
<svg style="left:1969px;top:1312px" width="26" height="22" viewBox="0 0 26 22"><g fill="none" stroke="#fff" stroke-width="1.6"><path d="M2 7.5H6L12 2V20L6 14.5H2Z"/><path d="M15.5 7.5C17 9.5 17 12.5 15.5 14.5M18.5 5C21 8.5 21 13.5 18.5 17"/></g><path d="M21.5 2.5C25 7 25 15 21.5 19.5" fill="none" stroke="#888" stroke-width="1.6"/></svg>
<div class="t" style="left:2050px;top:1303px;font-size:18px;color:#fff;transform:scaleX(0.9324);transform-origin:0 0">18:03</div>
<div class="t" style="left:2020.5px;top:1327px;font-size:18px;color:#fff;transform:scaleX(1.0203);transform-origin:0 0">2025/3/8</div>
</body></html>
